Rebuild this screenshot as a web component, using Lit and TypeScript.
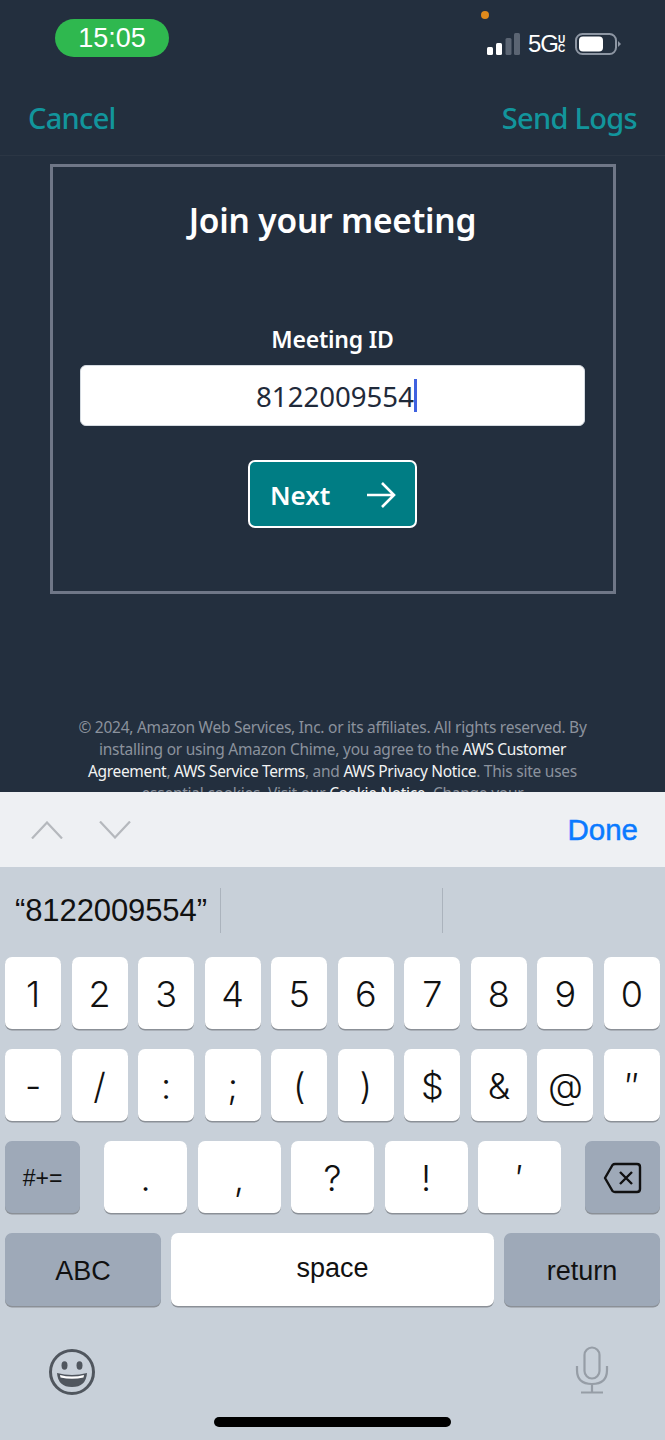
import { LitElement, html, css } from "lit";
import { customElement } from "lit/decorators.js";

const row1 = ["1","2","3","4","5","6","7","8","9","0"];
const row2 = ["-","/",":",";","(",")","$","&","@","″"];
const row3 = [".",",","?","!","′"];

@customElement("app-root")
export class AppRoot extends LitElement {
  static styles = css`
    :host { display: block; width: 665px; height: 1440px; overflow: hidden; font-family: "Noto Sans", sans-serif; }
    * { box-sizing: border-box; }
    .screen { height: 792px; background: #232f3e; overflow: hidden; display: flex; flex-direction: column; }
    .status { height: 60px; display: flex; justify-content: space-between; padding: 19px 44px 0 55px; flex: none; }
    .pill { width: 114px; height: 38px; border-radius: 19px; background: #2fb84f; color: #fff; font: 27px/39px "Liberation Sans", sans-serif; text-align: center; }
    .sys { width: 136px; position: relative; height: 41px; display: flex; align-items: flex-start; }
    .dot { position: absolute; left: -4px; top: -8px; width: 8px; height: 8px; border-radius: 50%; background: #df8a1c; }
    .sys-row { display: flex; align-items: center; height: 22px; margin-top: 14px; margin-left: 2px; }
    .g5 { font: 24px/22px "Liberation Sans", sans-serif; color: #fff; margin-left: 8px; width: 29px; letter-spacing: -1px; }
    .uc { font: bold 10px/9px "Liberation Sans", sans-serif; color: #fff; width: 9px; text-align: center; display: flex; flex-direction: column; }
    .batt { margin-left: 9px; display: block; }
    .nav { height: 96px; flex: none; border-bottom: 1px solid #2b3644; display: flex; justify-content: space-between; align-items: center; padding: 20px 28px 0; color: #12959c; font-size: 29px; font-weight: 500; letter-spacing: -0.7px; }
    .card { margin: 8px 49.5px 0; height: 430px; border: 3px solid #6f7787; flex: none; display: flex; flex-direction: column; align-items: center; color: #fff; }
    .title { font-size: 33.5px; font-weight: 600; line-height: 42px; margin-top: 32px; letter-spacing: -0.2px; }
    .label { font-size: 23px; font-weight: 600; line-height: 32px; margin-top: 82px; letter-spacing: -0.2px; }
    .input { width: 505px; height: 61px; margin-top: 10px; background: #fff; border-radius: 6px; border: 1px solid #d5dbe1; color: #1f2a3a; font-size: 27.6px; display: flex; align-items: center; justify-content: center; padding-left: 8px; }
    .caret { display: inline-block; width: 3px; height: 33px; background: #3f62e0; margin-left: 0; }
    .next { width: 169px; height: 68px; margin-top: 34px; background: #007d84; border: 2px solid #fff; border-radius: 7px; display: flex; align-items: center; justify-content: space-between; padding: 1px 19px 0 20px; font-size: 26px; font-weight: 600; }
    .legal { margin-top: 122px; padding: 0 70px; text-align: center; color: #8b929d; font-size: 15.5px; line-height: 22px; letter-spacing: -0.25px; flex: none; }
    .legal b { font-weight: 400; color: #f2f3f3; letter-spacing: -0.34px; }
    .kb { height: 648px; background: #c8d0d9; font-family: "Liberation Sans", sans-serif; color: #111; display: flex; flex-direction: column; }
    .tools { height: 75px; flex: none; background: #eef0f3; display: flex; align-items: center; padding: 0 27px 0 31px; gap: 36px; }
    .done { margin-left: auto; color: #0a7aff; font-size: 29.5px; -webkit-text-stroke: 0.5px #0a7aff; }
    .sugg { height: 90px; flex: none; display: grid; grid-template-columns: 221px 222px 1fr; align-items: center; font-size: 31px; letter-spacing: -0.1px; padding-bottom: 3px; }
    .sugg > div { height: 45px; line-height: 45px; border-right: 1px solid #abb3bd; padding-left: 15px; white-space: nowrap; }
    .sugg > div:last-child { border: 0; }
    .rows { display: flex; flex-direction: column; gap: 20px; padding: 0 5px; }
    .row { display: grid; gap: 10.5px; height: 72px; }
    .r10 { grid-template-columns: repeat(10, 1fr); }
    .r3 { grid-template-columns: 75px 1fr 75px; gap: 24px; }
    .r3c { display: grid; grid-template-columns: repeat(5, 1fr); gap: 10.5px; }
    .r4 { grid-template-columns: 156px 1fr 156px; gap: 10px; height: 73px; }
    .key { background: #fff; border-radius: 7px; box-shadow: 0 1.5px 0 #8b9097; display: flex; align-items: center; justify-content: center; font: 300 36px "Inter", sans-serif; padding-top: 2px; }
    .dark { background: #9ea9b8; }
    .sm { font: 23px "Liberation Sans", sans-serif; padding-top: 2px; }
    .md { font: 27px "Liberation Sans", sans-serif; padding-top: 4px; }
    .space { font: 27px "Liberation Sans", sans-serif; padding-top: 0; padding-bottom: 2px; }
    .bottom { flex: 1; position: relative; display: flex; justify-content: space-between; padding: 21px 56px 0 48px; align-items: flex-start; }
    .emoji { margin-top: 21px; }
    .mic { margin-top: 19px; }
    .home { position: absolute; left: 214px; bottom: 13px; width: 237px; height: 10px; border-radius: 5px; background: #000; }
  `;

  key(k: string) { return html`<div class="key">${k}</div>`; }

  render() {
    return html`
      <div class="screen">
        <div class="status">
          <div class="pill">15:05</div>
          <div class="sys">
            <span class="dot"></span>
            <div class="sys-row">
              <svg width="33" height="22" viewBox="0 0 33 22" aria-hidden="true">
                <rect x="0" y="14" width="6" height="8" rx="1.5" fill="#fff"/>
                <rect x="9" y="10" width="6" height="12" rx="1.5" fill="#fff"/>
                <rect x="18.5" y="5" width="6" height="17" rx="1.5" fill="#5b6573"/>
                <rect x="27" y="0" width="6" height="22" rx="1.5" fill="#5b6573"/>
              </svg>
              <span class="g5">5G</span>
              <span class="uc"><span>U</span><span>C</span></span>
              <svg class="batt" width="47" height="22" viewBox="0 0 47 22" aria-hidden="true">
                <rect x="1" y="1" width="40" height="20" rx="6.5" fill="none" stroke="#8d96a3" stroke-width="2"/>
                <rect x="4" y="3.5" width="24" height="15" rx="4" fill="#fff"/>
                <path d="M43 8 L46 11 L43 14 Z" fill="#8d96a3"/>
              </svg>
            </div>
          </div>
        </div>
        <div class="nav"><span>Cancel</span><span>Send Logs</span></div>
        <div class="card">
          <div class="title">Join your meeting</div>
          <div class="label">Meeting ID</div>
          <div class="input"><span>8122009554</span><span class="caret"></span></div>
          <div class="next">
            <span>Next</span>
            <svg width="30" height="26" viewBox="0 0 30 26" fill="none" stroke="#fff" stroke-width="2.6" aria-hidden="true">
              <path d="M1 13 H28 M16 1 L28 13 L16 25"/>
            </svg>
          </div>
        </div>
        <div class="legal">
          © 2024, Amazon Web Services, Inc. or its affiliates. All rights reserved. By
          installing or using Amazon Chime, you agree to the <b>AWS Customer Agreement</b>,
          <b>AWS Service Terms</b>, and <b>AWS Privacy Notice</b>. This site uses
          essential cookies. Visit our <b>Cookie Notice</b>. Change your
        </div>
      </div>
      <div class="kb">
        <div class="tools">
          <svg width="32" height="18" viewBox="0 0 32 18" fill="none" stroke="#b5b8bd" stroke-width="2.2" aria-hidden="true"><path d="M1 17.5 L16 1.5 L31 17.5"/></svg>
          <svg width="32" height="18" viewBox="0 0 32 18" fill="none" stroke="#b5b8bd" stroke-width="2.2" aria-hidden="true"><path d="M1 .5 L16 16.5 L31 .5"/></svg>
          <span class="done">Done</span>
        </div>
        <div class="sugg"><div>“8122009554”</div><div></div><div></div></div>
        <div class="rows">
          <div class="row r10">${row1.map((k) => this.key(k))}</div>
          <div class="row r10">${row2.map((k) => this.key(k))}</div>
          <div class="row r3">
            <div class="key dark sm">#+=</div>
            <div class="r3c">${row3.map((k) => this.key(k))}</div>
            <div class="key dark">
              <svg width="39" height="32" viewBox="0 0 39 32" fill="none" stroke="#111" stroke-width="2.4" stroke-linejoin="round" aria-hidden="true">
                <path d="M12 2 H34 Q37 2 37 5 V27 Q37 30 34 30 H12 Q10.5 30 9.5 29 L2 16 L9.5 3 Q10.5 2 12 2 Z"/>
                <path d="M17 10 L29 22 M29 10 L17 22"/>
              </svg>
            </div>
          </div>
          <div class="row r4">
            <div class="key dark md">ABC</div>
            <div class="key space">space</div>
            <div class="key dark md">return</div>
          </div>
        </div>
        <div class="bottom">
          <svg class="emoji" width="48" height="48" viewBox="0 0 48 48" aria-hidden="true">
            <circle cx="24" cy="24" r="21.5" fill="none" stroke="#50565e" stroke-width="3"/>
            <ellipse cx="16.5" cy="17.5" rx="3" ry="4.2" fill="#50565e"/>
            <ellipse cx="31.5" cy="17.5" rx="3" ry="4.2" fill="#50565e"/>
            <path d="M9 25 Q24 29 39 25 Q38 39 24 39 Q10 39 9 25 Z" fill="#50565e"/>
            <path d="M12 27 Q24 30 36 27 L35.5 29.5 Q24 32 12.5 29.5 Z" fill="#fff"/>
          </svg>
          <svg class="mic" width="34" height="48" viewBox="0 0 34 48" fill="none" stroke="#969da6" stroke-width="2.2" aria-hidden="true">
            <rect x="9.5" y="1.5" width="15" height="31" rx="7.5"/>
            <path d="M2 20 V24 Q2 38 17 38 Q32 38 32 24 V20 M17 38 V46 M6 46.5 H28"/>
          </svg>
        </div>
        <div class="home"></div>
      </div>
    `;
  }
}
